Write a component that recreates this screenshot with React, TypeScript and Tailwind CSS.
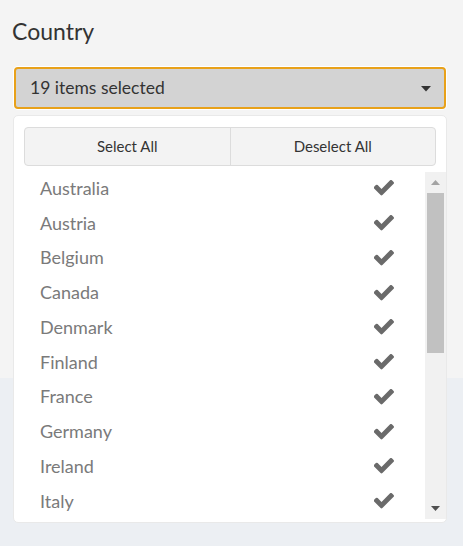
import React from 'react';

const countries = [
  'Australia',
  'Austria',
  'Belgium',
  'Canada',
  'Denmark',
  'Finland',
  'France',
  'Germany',
  'Ireland',
  'Italy',
];

// heavy check mark, same shape as the old font-awesome one
const CheckMark = () => (
  <svg width="20" height="16" viewBox="140 400 1531 1100" className="shrink-0">
    <path
      d="M1671 566q0 40-28 68l-724 724-136 136q-28 28-68 28t-68-28l-136-136-362-362q-28-28-28-68t28-68l136-136q28-28 68-28t68 28l294 295 656-657q28-28 68-28t68 28l136 136q28 28 28 68z"
      fill="#6a6a6a"
    />
  </svg>
);

const CountryRow = ({ name }: { name: string }) => (
  <div className="flex h-[34.75px] items-center justify-between pl-[26px] pr-[31px]">
    <span className="text-[18px] text-[#7a7a7a]">{name}</span>
    <CheckMark />
  </div>
);

export default function App() {
  return (
    <div className="relative min-h-[546px] bg-[#eceff3] font-['Lato','Liberation_Sans',sans-serif]">
      <div className="h-[378px] bg-[#f4f4f4] pl-[13px] pr-[16px] pt-[18px]">
        <h2 className="-ml-px text-[23px] leading-[26px] text-[#333]">Country</h2>

        <div className="relative mt-[22px]">
          {/* Select button */}
          <div className="rounded-[5px] bg-white p-px">
            <button className="flex h-[42px] w-full items-center justify-between rounded-[4px] border-2 border-[#e8a11a] bg-[#d3d3d3] pl-[14px] pr-[13px] text-left">
              <span className="text-[17.5px] text-[#333]">19 items selected</span>
              <svg width="10" height="6" viewBox="0 0 10 6" className="mt-px">
                <path d="M0 0 L10 0 L5 5.5 Z" fill="#333" />
              </svg>
            </button>
          </div>

          {/* Dropdown menu */}
          <div className="absolute left-0 right-0 top-[49px] h-[408px] rounded-[5px] border border-[#e9e9e9] bg-white">
            <div className="mx-[10px] mt-[11px] flex h-[39px] rounded-[4px] border border-[#dcdcdc] bg-[#f3f3f3] text-[15px] text-[#333]">
              <button className="flex flex-1 items-center justify-center border-r border-[#dcdcdc]">Select All</button>
              <button className="flex flex-1 items-center justify-center">Deselect All</button>
            </div>

            <div className="mt-[6px] flex h-[347px]">
              <div className="-mt-px flex-1 overflow-hidden">
                {countries.map((c) => (
                  <CountryRow key={c} name={c} />
                ))}
              </div>

              {/* Scrollbar */}
              <div className="flex w-[21px] flex-col items-center bg-[#f1f1f1]">
                <div className="flex h-[21px] items-center justify-center">
                  <svg width="9" height="5" viewBox="0 0 9 5">
                    <path d="M0 5 L9 5 L4.5 0 Z" fill="#a3a3a3" />
                  </svg>
                </div>
                <div className="h-[160px] w-[17px] bg-[#c1c1c1]" />
                <div className="flex-1" />
                <div className="flex h-[21px] items-center justify-center">
                  <svg width="9" height="5" viewBox="0 0 9 5">
                    <path d="M0 0 L9 0 L4.5 5 Z" fill="#505050" />
                  </svg>
                </div>
              </div>
            </div>
          </div>
        </div>
      </div>
    </div>
  );
}
